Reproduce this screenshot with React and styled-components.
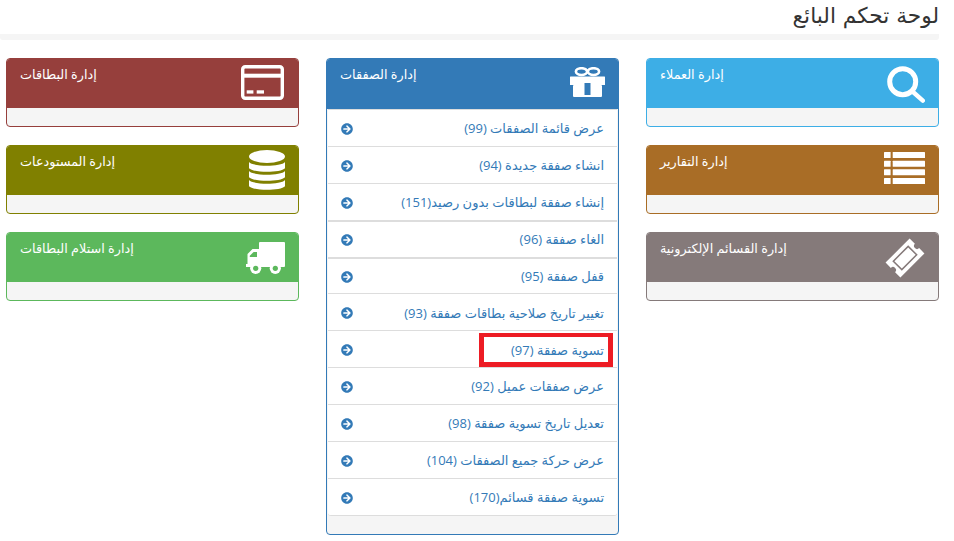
import React from 'react';
import styled, { createGlobalStyle } from 'styled-components';
import { FaArrowCircleRight } from 'react-icons/fa';

const GlobalStyle = createGlobalStyle`
    html, body {
        margin: 0;
        background: #fff;
    }
    body {
        font-family: "Open Sans", "DejaVu Sans", sans-serif;
        font-size: 13px;
        line-height: 1.43;
        color: #333;
    }
`;

const Page = styled.div`
    direction: rtl;
    width: 954px;
    height: 541px;
    overflow: hidden;
    box-sizing: border-box;
    padding: 0 15px;
`;

const Title = styled.h1`
    margin: 0 0 18px -15px;
    height: 40px;
    box-sizing: border-box;
    border-bottom: 6px solid #f5f5f5;
    border-radius: 3px;
    font-family: "DejaVu Sans", sans-serif;
    font-size: 21.7px;
    font-weight: 400;
    line-height: 32px;
    color: #333;
`;

const Columns = styled.div`
    display: grid;
    grid-template-columns: repeat(3, 293px);
    column-gap: 27px;
    margin-left: -9px;
    align-items: start;
`;

const Column = styled.div`
    display: flex;
    flex-direction: column;
    gap: 18px;
`;

const Panel = styled.div`
    border: 1px solid ${(p) => p.$color};
    border-radius: 4px;
    background: #f5f5f5;
    overflow: hidden;
`;

const PanelHead = styled.div`
    direction: ltr;
    box-sizing: border-box;
    height: ${(p) => (p.$tall ? 50 : 49)}px;
    background: ${(p) => p.$color};
    color: #fff;
    display: flex;
    justify-content: space-between;
    padding: 5px 13px 0;
`;

const PanelTitle = styled.span`
    direction: rtl;
    font-size: 12.8px;
    line-height: 20px;
`;

const IconSvg = styled.svg`
    display: block;
    flex: none;
    margin-top: ${(p) => p.$top}px;
    margin-right: ${(p) => p.$right || 0}px;
`;

const PanelFoot = styled.div`
    height: 18px;
`;

const MenuList = styled.div`
    background: #fff;
    margin: 0 1px;
    border-bottom: 1px solid #ddd;
    border-radius: 0 0 3px 3px;
`;

const MenuRow = styled.a`
    position: relative;
    box-sizing: border-box;
    display: flex;
    justify-content: space-between;
    align-items: center;
    height: 36.9px;
    padding: 1px 13px 0;
    border-top: ${(p) => (p.$thick ? 2 : 1)}px solid #ddd;
    color: #337ab7;
    text-decoration: none;
`;

const RowArrow = styled(FaArrowCircleRight)`
    margin-bottom: -1px;
`;

const Highlight = styled.span`
    position: absolute;
    top: 2px;
    right: 4px;
    box-sizing: border-box;
    width: 134px;
    height: 34px;
    border: 5px solid #ed1c24;
    border-top-width: 4px;
`;

const SearchIcon = () => (
    <IconSvg $top={2} width="38" height="37" viewBox="0 0 38 37" fill="none" stroke="#fff">
        <circle cx="15.7" cy="15.7" r="13" strokeWidth="5" />
        <line x1="25.5" y1="25.5" x2="35.8" y2="34.6" strokeWidth="4.4" strokeLinecap="round" />
    </IconSvg>
);

const ListIcon = () => (
    <IconSvg $top={1.3} width="41" height="32" viewBox="0 0 41 32" fill="#fff">
        {[0, 8.67, 17.33, 26].map((y) => (
            <g key={y}>
                <rect x="0" y={y} width="6.6" height="6" rx="0.5" />
                <rect x="8.7" y={y} width="32.3" height="6" rx="0.5" />
            </g>
        ))}
    </IconSvg>
);

const TicketIcon = ({ hole }) => (
    <IconSvg $top={0} width="40" height="40" viewBox="-20 -20 40 40">
        <g transform="rotate(-45)">
            <path
                fill="#fff"
                d="M-17 -10.5H17V-3A3 3 0 0 0 17 3V10.5H-17V3A3 3 0 0 0 -17 -3Z"
            />
            <rect x="-10.5" y="-6" width="21" height="12" fill="#fff" stroke={hole} strokeWidth="1.5" />
        </g>
    </IconSvg>
);

const CardIcon = () => (
    <IconSvg $top={1} $right={1} width="43" height="35" viewBox="0 0 43 35" fill="#fff">
        <rect x="1.7" y="1.7" width="39.6" height="31.6" rx="2.5" fill="none" stroke="#fff" strokeWidth="3.4" />
        <rect x="2" y="8.7" width="39" height="4" />
        <rect x="5.7" y="25.3" width="6.7" height="3.3" />
        <rect x="15.7" y="25.3" width="7.3" height="3.3" />
    </IconSvg>
);

const DatabaseIcon = () => (
    <IconSvg $top={-1} width="36" height="40" viewBox="0 0 36 40" fill="#fff">
        <ellipse cx="18" cy="6.5" rx="18" ry="6.5" />
        {[12, 21, 30].map((y) => (
            <path
                key={y}
                d={`M0 ${y}C4 ${y + 5} 32 ${y + 5} 36 ${y}V${y + 6.2}C32 ${y + 11} 4 ${y + 11} 0 ${y + 6.2}Z`}
            />
        ))}
    </IconSvg>
);

const TruckIcon = ({ hole }) => (
    <IconSvg $top={4} width="39" height="32" viewBox="0 0 39 32" fill="#fff">
        <rect x="13" y="0" width="26" height="25" rx="1" />
        <path d="M14 7H6.5L1.5 12V22H0V25H14Z" />
        <path fill={hole} d="M11 10H7.6L3.8 13.8V15H11Z" />
        {[9.7, 29.3].map((cx) => (
            <g key={cx}>
                <circle cx={cx} cy="26.3" r="5.6" fill="#fff" />
                <circle cx={cx} cy="26.3" r="2.6" fill={hole} />
            </g>
        ))}
    </IconSvg>
);

const GiftIcon = ({ hole }) => (
    <IconSvg $top={3} width="35" height="30" viewBox="0 0 35 30">
        <ellipse cx="11.5" cy="4.6" rx="5.6" ry="3.4" fill="none" stroke="#fff" strokeWidth="2.6" />
        <ellipse cx="23.5" cy="4.6" rx="5.6" ry="3.4" fill="none" stroke="#fff" strokeWidth="2.6" />
        <rect x="0" y="9.5" width="35" height="8.5" rx="0.5" fill="#fff" />
        <rect x="3" y="18" width="29" height="12" rx="1" fill="#fff" />
        <rect x="14.5" y="16" width="6" height="12" fill={hole} />
    </IconSvg>
);

const deals = [
    { label: 'عرض قائمة الصفقات (99)' },
    { label: 'انشاء صفقة جديدة (94)' },
    { label: 'إنشاء صفقة لبطاقات بدون رصيد(151)' },
    { label: 'الغاء صفقة (96)', thick: true },
    { label: 'قفل صفقة (95)', thick: true },
    { label: 'تغيير تاريخ صلاحية بطاقات صفقة (93)' },
    { label: 'تسوية صفقة (97)', marked: true },
    { label: 'عرض صفقات عميل (92)' },
    { label: 'تعديل تاريخ تسوية صفقة (98)' },
    { label: 'عرض حركة جميع الصفقات (104)' },
    { label: 'تسوية صفقة قسائم(170)' },
];

const SmallPanel = ({ color, title, icon }) => (
    <Panel $color={color}>
        <PanelHead $color={color}>
            <PanelTitle>{title}</PanelTitle>
            {icon}
        </PanelHead>
        <PanelFoot />
    </Panel>
);

const App = () => {
    return (
        <Page>
            <GlobalStyle />
            <Title>لوحة تحكم البائع</Title>
            <Columns>
                <Column>
                    <SmallPanel color="#3daee6" title="إدارة العملاء" icon={<SearchIcon />} />
                    <SmallPanel color="#a96d26" title="إدارة التقارير" icon={<ListIcon />} />
                    <SmallPanel
                        color="#857a7a"
                        title="إدارة القسائم الإلكترونية"
                        icon={<TicketIcon hole="#857a7a" />}
                    />
                </Column>
                <Column>
                    <Panel $color="#337ab7">
                        <PanelHead $color="#337ab7" $tall>
                            <PanelTitle>إدارة الصفقات</PanelTitle>
                            <GiftIcon hole="#337ab7" />
                        </PanelHead>
                        <MenuList>
                            {deals.map((deal) => (
                                <MenuRow key={deal.label} $thick={deal.thick}>
                                    <span>{deal.label}</span>
                                    <RowArrow size={12} />
                                    {deal.marked && <Highlight />}
                                </MenuRow>
                            ))}
                        </MenuList>
                        <PanelFoot />
                    </Panel>
                </Column>
                <Column>
                    <SmallPanel color="#963f3c" title="إدارة البطاقات" icon={<CardIcon />} />
                    <SmallPanel color="#808000" title="إدارة المستودعات" icon={<DatabaseIcon />} />
                    <SmallPanel
                        color="#5cb85c"
                        title="إدارة استلام البطاقات"
                        icon={<TruckIcon hole="#5cb85c" />}
                    />
                </Column>
            </Columns>
        </Page>
    );
};

export default App;
